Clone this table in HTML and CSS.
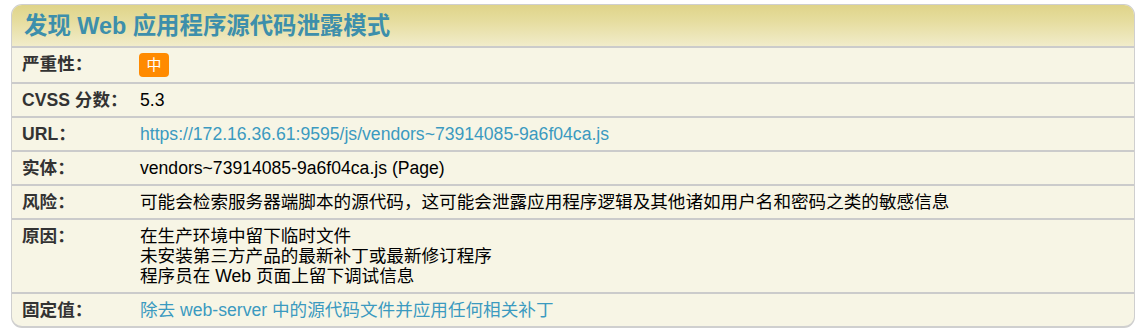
FILE: index.html
```html
<!DOCTYPE html>
<html lang="zh-CN">
<head>
<meta charset="utf-8">
<title>发现 Web 应用程序源代码泄露模式</title>
<link rel="stylesheet" href="styles.css">
</head>
<body>
<div class="panel">
  <div class="panel-head">发现 Web 应用程序源代码泄露模式</div>
  <div class="row">
    <div class="label">严重性：</div>
    <div class="value"><span class="badge">中</span></div>
  </div>
  <div class="row">
    <div class="label">CVSS 分数：</div>
    <div class="value">5.3</div>
  </div>
  <div class="row">
    <div class="label">URL：</div>
    <div class="value link">https://172.16.36.61:9595/js/vendors~73914085-9a6f04ca.js</div>
  </div>
  <div class="row">
    <div class="label">实体：</div>
    <div class="value">vendors~73914085-9a6f04ca.js (Page)</div>
  </div>
  <div class="row">
    <div class="label">风险：</div>
    <div class="value">可能会检索服务器端脚本的源代码，这可能会泄露应用程序逻辑及其他诸如用户名和密码之类的敏感信息</div>
  </div>
  <div class="row">
    <div class="label">原因：</div>
    <div class="value">在生产环境中留下临时文件<br>未安装第三方产品的最新补丁或最新修订程序<br>程序员在 Web 页面上留下调试信息</div>
  </div>
  <div class="row">
    <div class="label">固定值：</div>
    <div class="value link">除去 web-server 中的源代码文件并应用任何相关补丁</div>
  </div>
</div>
</body>
</html>
```

FILE: styles.css
```css
html, body {
  margin: 0;
  padding: 0;
  background: #ffffff;
}
body {
  padding: 4px 6px 5px 11px;
  font-family: "Liberation Sans", Arial, "Noto Sans CJK SC", sans-serif;
  font-size: 17.6px;
  color: #000;
}
.panel {
  width: 1124px;
  box-sizing: border-box;
  border: 1px solid #cfcfcf;
  border-bottom-width: 2px;
  border-radius: 11px;
  background: #f7f5e5;
  overflow: hidden;
}
.panel-head {
  height: 41px;
  box-sizing: border-box;
  padding: 6px 0 0 12px;
  background: linear-gradient(to bottom, #dfd489 0%, #e6dd9f 40%, #f1ecca 100%);
  color: #3d8fab;
  font-weight: bold;
  font-size: 23.4px;
  line-height: 30px;
}
.row {
  display: flex;
  align-items: flex-start;
  border-top: 2px solid #cbcbcb;
  padding: 6px 0;
  line-height: 20px;
}
.label {
  width: 118px;
  flex: none;
  padding-left: 10px;
  font-weight: bold;
  color: #333;
}
.value {
  flex: 1;
}
.link {
  color: #3b9ac0;
}
.badge {
  display: inline-block;
  width: 30px;
  height: 24px;
  margin: -1px 0 -1px -1px;
  border-radius: 4px;
  background: #ff8a00;
  color: #fff;
  font-size: 15px;
  line-height: 24px;
  text-align: center;
  vertical-align: top;
}
```
